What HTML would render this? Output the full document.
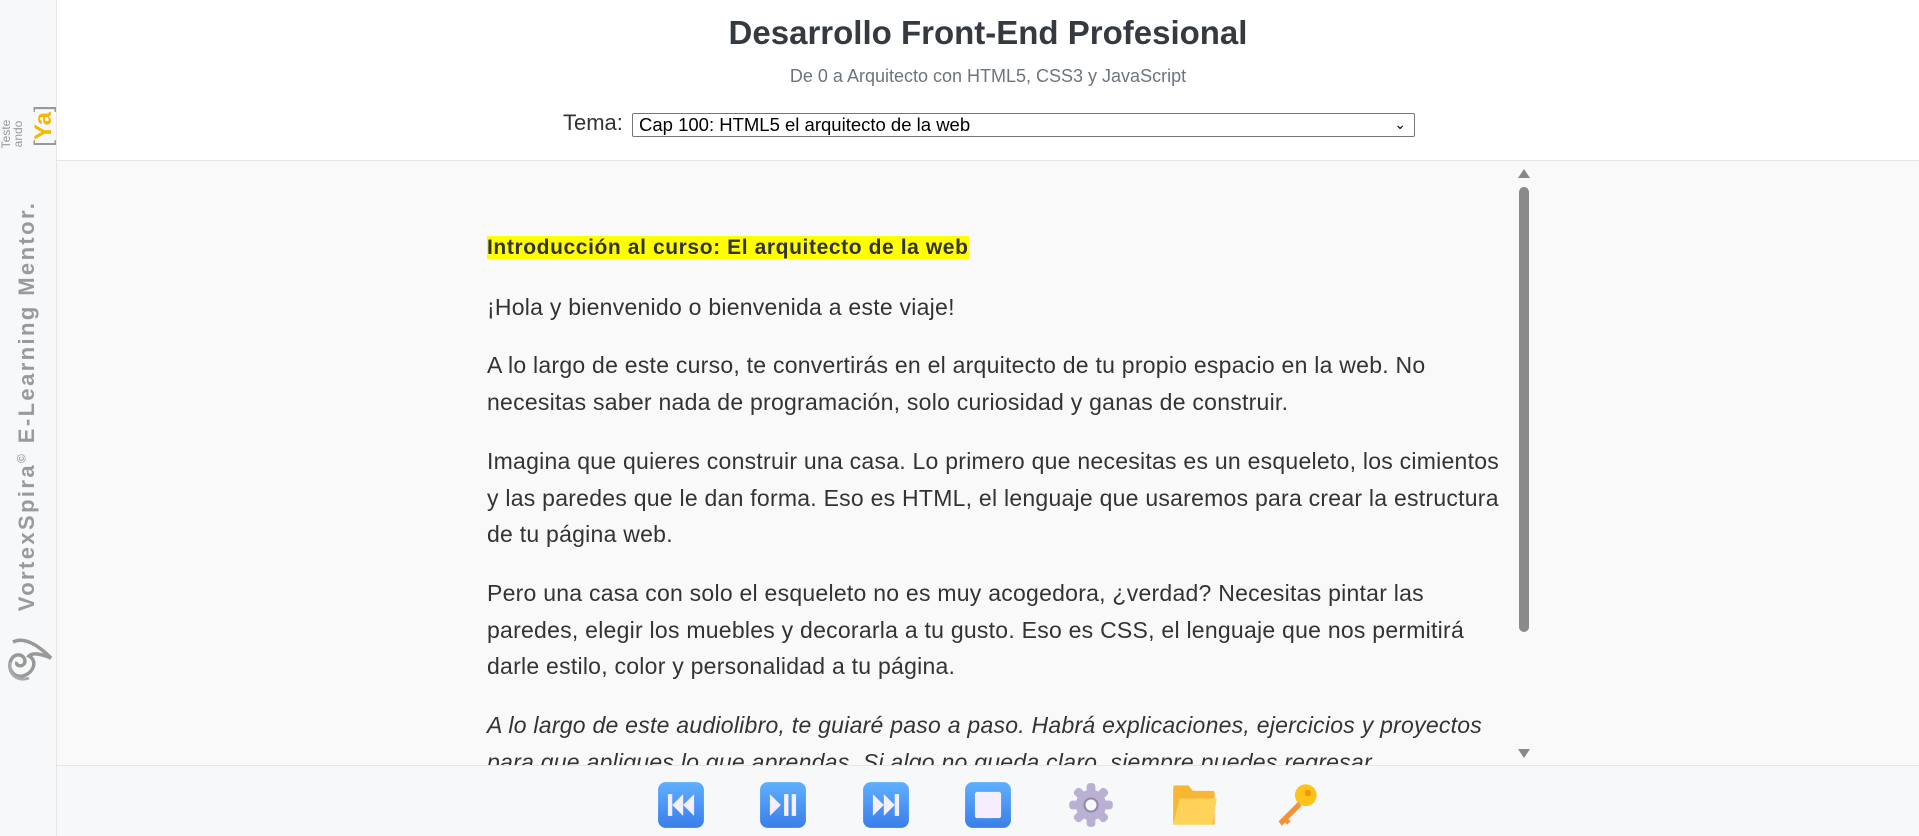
<!DOCTYPE html>
<html><head><meta charset="utf-8">
<style>
*{box-sizing:border-box;margin:0;padding:0}
html,body{width:1919px;height:836px;overflow:hidden;font-family:"Liberation Sans",Arial,sans-serif;background:#f9f9f9}
#side{position:absolute;left:0;top:0;width:57px;height:836px;background:#f7f8fa;border-right:1px solid #e6e6e6}
#hdr{position:absolute;left:57px;top:0;right:0;height:161px;background:#fff;border-bottom:1px solid #e5e5e5;text-align:center}
#hdr h1{position:absolute;left:0;right:0;top:14px;font-size:33px;font-weight:bold;color:#343a40}
#hdr .sub{position:absolute;left:0;right:0;top:66px;font-size:18px;color:#6c757d}
#tema{position:absolute;left:506px;top:110px;font-size:22px;color:#333}
#sel{position:absolute;left:575px;top:113px;width:783px;height:24px;border:1px solid #767676;border-radius:2px;background:#fff;font-size:18.5px;color:#000;padding:1px 6px;text-align:left;line-height:20px}
#sel span.ar{position:absolute;right:8px;top:0px;font-size:14px}
#content{position:absolute;left:57px;top:162px;width:1458px;height:603px;overflow:hidden;background:#f9f9f9}
#txt{position:absolute;left:430px;top:66px;width:1000px;font-size:23px;letter-spacing:0.25px;line-height:36.7px;color:#333;white-space:nowrap}
#txt p{margin-bottom:22px}
#txt .h{background:#ff0;font-weight:bold;font-size:21px;letter-spacing:0.6px}
#sb{position:absolute;left:1515px;top:165px;width:18px;height:597px;background:#f9f9f9}
#thumb{position:absolute;left:4px;top:22px;width:10px;height:445px;border-radius:5px;background:#8a8a8a}
#ft{position:absolute;left:57px;top:765px;right:0;bottom:0;background:#f7f8fa;border-top:1px solid #e6e6e6}
.ic{position:absolute;top:781px;width:48px;height:48px}
</style></head><body>
<div id="side">
 <div style="position:absolute;left:2px;top:104px;width:52px;height:50px">
  <div style="position:absolute;left:-10px;top:18px;transform:rotate(-90deg);font-size:12px;color:#999;line-height:12px;width:40px;text-align:center">Teste<br>ando</div>
  <div style="position:absolute;left:20px;top:8px;transform:rotate(-90deg);transform-origin:center;font-size:24px;font-weight:bold;color:#f5b800;width:44px;text-align:center;line-height:28px"><span style="color:#999;font-weight:normal">[</span>Ya<span style="color:#999;font-weight:normal">]</span></div>
 </div>
 <div style="position:absolute;left:27px;top:406px;transform:translate(-50%,-50%) rotate(-90deg);white-space:nowrap;font-size:22px;font-weight:bold;color:#9a9a9a;letter-spacing:2.4px">VortexSpira<sup style="font-size:12px">©</sup> E-Learning Mentor.</div>
 <svg style="position:absolute;left:5px;top:632px" width="48" height="52" viewBox="0 0 48 52"><path d="M8 10 C20 4 34 14 46 26 C36 22 28 20 24 24 C32 28 30 40 18 44 C8 46 2 36 6 28 C10 20 20 22 20 30 C18 36 10 34 12 30" fill="none" stroke="#999" stroke-width="3.5"/><path d="M5 30 C3 42 12 50 24 46" fill="none" stroke="#aaa" stroke-width="3"/></svg>
</div>
<div id="hdr">
 <h1>Desarrollo Front-End Profesional</h1>
 <div class="sub">De 0 a Arquitecto con HTML5, CSS3 y JavaScript</div>
 <div id="tema">Tema:</div>
 <div id="sel">Cap 100: HTML5 el arquitecto de la web<span class="ar">&#8964;</span></div>
</div>
<div id="content">
 <div id="txt">
  <p><span class="h">Introducción al curso: El arquitecto de la web</span></p>
  <p>¡Hola y bienvenido o bienvenida a este viaje!</p>
  <p>A lo largo de este curso, te convertirás en el arquitecto de tu propio espacio en la web. No<br>necesitas saber nada de programación, solo curiosidad y ganas de construir.</p>
  <p>Imagina que quieres construir una casa. Lo primero que necesitas es un esqueleto, los cimientos<br>y las paredes que le dan forma. Eso es HTML, el lenguaje que usaremos para crear la estructura<br>de tu página web.</p>
  <p>Pero una casa con solo el esqueleto no es muy acogedora, ¿verdad? Necesitas pintar las<br>paredes, elegir los muebles y decorarla a tu gusto. Eso es CSS, el lenguaje que nos permitirá<br>darle estilo, color y personalidad a tu página.</p>
  <p><i>A lo largo de este audiolibro, te guiaré paso a paso. Habrá explicaciones, ejercicios y proyectos<br>para que apliques lo que aprendas. Si algo no queda claro, siempre puedes regresar.</i></p>
 </div>
</div>
<div id="sb"><div style="position:absolute;left:3px;top:4px;width:0;height:0;border-left:6px solid transparent;border-right:6px solid transparent;border-bottom:9px solid #888"></div><div id="thumb"></div><div style="position:absolute;left:3px;bottom:4px;width:0;height:0;border-left:6px solid transparent;border-right:6px solid transparent;border-top:9px solid #888"></div></div>
<div id="ft"></div>
<svg class="ic" style="left:657px" viewBox="0 0 44 44"><defs><linearGradient id="b" x1="0" y1="0" x2="0" y2="1"><stop offset="0" stop-color="#5fb0ff"/><stop offset="1" stop-color="#3a7ee8"/></linearGradient></defs><rect x="1" y="1" width="42" height="42" rx="7" fill="url(#b)"/><rect x="10" y="12" width="4" height="20" fill="#f5eefe"/><path d="M24 12 L14 22 L24 32Z M34 12 L24 22 L34 32Z" fill="#f5eefe"/></svg>
<svg class="ic" style="left:759px" viewBox="0 0 44 44"><rect x="1" y="1" width="42" height="42" rx="7" fill="url(#b)"/><path d="M10 12 L20 22 L10 32Z" fill="#f5eefe"/><rect x="23" y="12" width="4" height="20" fill="#f5eefe"/><rect x="30" y="12" width="4" height="20" fill="#f5eefe"/></svg>
<svg class="ic" style="left:862px" viewBox="0 0 44 44"><rect x="1" y="1" width="42" height="42" rx="7" fill="url(#b)"/><path d="M10 12 L20 22 L10 32Z M20 12 L30 22 L20 32Z" fill="#f5eefe"/><rect x="30" y="12" width="4" height="20" fill="#f5eefe"/></svg>
<svg class="ic" style="left:964px" viewBox="0 0 44 44"><rect x="1" y="1" width="42" height="42" rx="7" fill="url(#b)"/><rect x="10" y="10" width="24" height="24" rx="2" fill="#f5eefe"/></svg>
<svg class="ic" style="left:1067px" viewBox="0 0 44 44"><g fill="#b9b0d4"><circle cx="22" cy="22" r="14"/><g id="t"><rect x="18" y="2" width="8" height="10" rx="3"/><rect x="18" y="32" width="8" height="10" rx="3"/></g><use href="#t" transform="rotate(45 22 22)"/><use href="#t" transform="rotate(90 22 22)"/><use href="#t" transform="rotate(135 22 22)"/></g><circle cx="22" cy="22" r="6" fill="#f7f8fa" stroke="#958aa8" stroke-width="2"/></svg>
<svg class="ic" style="left:1171px" viewBox="0 0 44 44"><path d="M2 6 Q2 4 4 4 L16 4 L20 9 L38 9 Q40 9 40 11 L40 40 L2 40Z" fill="#f7b733"/><path d="M8 16 L42 16 L38 40 L2 40Z" fill="#ffd25a"/></svg>
<svg class="ic" style="left:1272px" viewBox="0 0 44 44"><circle cx="31" cy="13" r="10" fill="#ffc21a"/><circle cx="33" cy="11" r="3" fill="#e89a10"/><path d="M24 19 L6 37 L9 41 L12 38 L14 40 L17 37 L15 35 L27 23Z" fill="#f3923a"/></svg>
</body></html>
